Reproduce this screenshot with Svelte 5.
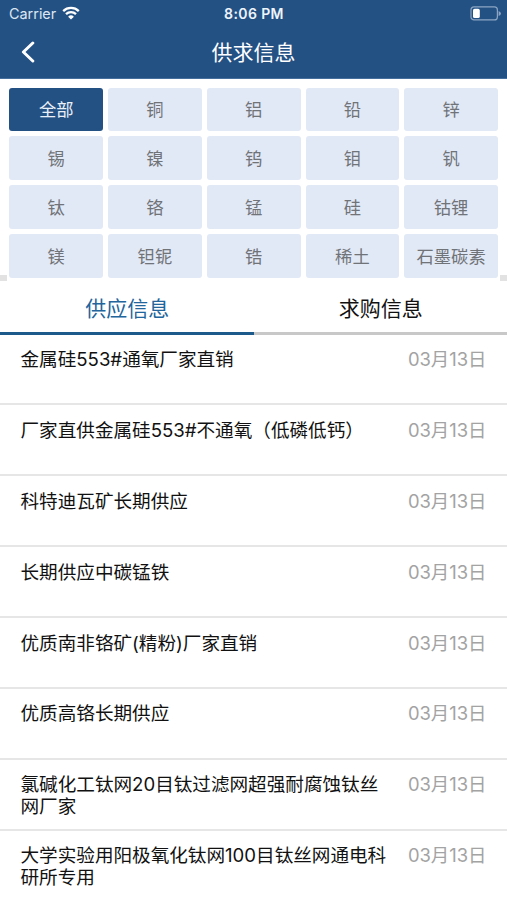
<script lang="ts">
interface Post {
  id: number
  title: string
  date: string
}

type TabKey = 'supply' | 'demand'

const categories = [
  '全部', '铜', '铝', '铅', '锌',
  '锡', '镍', '钨', '钼', '钒',
  '钛', '铬', '锰', '硅', '钴锂',
  '镁', '钽铌', '锆', '稀土', '石墨碳素',
]

const tabs: { key: TabKey; label: string }[] = [
  { key: 'supply', label: '供应信息' },
  { key: 'demand', label: '求购信息' },
]

const posts: Post[] = [
  { id: 1, title: '金属硅553#通氧厂家直销', date: '03月13日' },
  { id: 2, title: '厂家直供金属硅553#不通氧（低磷低钙）', date: '03月13日' },
  { id: 3, title: '科特迪瓦矿长期供应', date: '03月13日' },
  { id: 4, title: '长期供应中碳锰铁', date: '03月13日' },
  { id: 5, title: '优质南非铬矿(精粉)厂家直销', date: '03月13日' },
  { id: 6, title: '优质高铬长期供应', date: '03月13日' },
  { id: 7, title: '氯碱化工钛网20目钛过滤网超强耐腐蚀钛丝网厂家', date: '03月13日' },
  { id: 8, title: '大学实验用阳极氧化钛网100目钛丝网通电科研所专用', date: '03月13日' },
]

let activeCategory = $state('全部')
let activeTab = $state<TabKey>('supply')
</script>

<div class="screen">
  <header>
    <div class="status-bar">
      <div class="carrier">
        <span>Carrier</span>
        <svg class="wifi" viewBox="0 0 18 14" aria-hidden="true">
          <path d="M1.2 5.1a11.2 11.2 0 0 1 15.6 0" />
          <path d="M4 8.2a7.2 7.2 0 0 1 10 0" />
          <path class="dot" d="M9 13.6 6.1 10.7a4.1 4.1 0 0 1 5.8 0z" />
        </svg>
      </div>
      <span class="time">8:06 PM</span>
      <svg class="battery" viewBox="0 0 32 15" aria-hidden="true">
        <rect class="shell" x="1" y="0.9" width="26.4" height="13" rx="3" />
        <rect class="level" x="3" y="2.8" width="6.8" height="9.2" rx="1.6" />
        <path class="cap" d="M28.6 5v5q2.4-1 2.4-2.5T28.6 5z" />
      </svg>
    </div>
    <div class="nav-bar">
      <button class="back" aria-label="返回">
        <svg viewBox="0 0 14 22" aria-hidden="true">
          <path d="M11.8 2 2.4 11l9.4 9" />
        </svg>
      </button>
      <h1>供求信息</h1>
    </div>
  </header>

  <div class="filter">
    <div class="categories">
      {#each categories as name (name)}
        <button
          class="category"
          class:active={name === activeCategory}
          onclick={() => (activeCategory = name)}
        >{name}</button>
      {/each}
    </div>
  </div>

  <div class="tabs" role="tablist">
    {#each tabs as tab (tab.key)}
      <button
        class="tab"
        class:active={tab.key === activeTab}
        role="tab"
        aria-selected={tab.key === activeTab}
        onclick={() => (activeTab = tab.key)}
      >{tab.label}</button>
    {/each}
  </div>

  <ul class="posts">
    {#each posts as post (post.id)}
      <li>
        <span class="title">{post.title}</span>
        <time>{post.date}</time>
      </li>
    {/each}
  </ul>
</div>

<style>
  :global(body) {
    background: #fff;
  }

  .screen {
    height: 900px;
    overflow: hidden;
    display: flex;
    flex-direction: column;
    background: #fff;
    font-family: Inter, 'Noto Sans CJK SC', sans-serif;
  }

  button {
    margin: 0;
    padding: 0;
    border: none;
    background: none;
    font-family: inherit;
    cursor: pointer;
  }

  header {
    flex: none;
    height: 79px;
    box-sizing: border-box;
    background: #245184;
    border-bottom: 1px solid #466f9e;
    color: #fff;
  }

  .status-bar {
    display: grid;
    grid-template-columns: 1fr auto 1fr;
    align-items: center;
    height: 27px;
    padding: 0 5px 0 9px;
  }

  .carrier {
    display: flex;
    align-items: center;
    gap: 6px;
    font-size: 14.4px;
    color: #dce6f2;
  }

  .wifi {
    width: 18px;
    height: 14px;
    margin-top: -1px;
    fill: none;
    stroke: #fff;
    stroke-width: 2.3;
  }

  .wifi .dot {
    fill: #fff;
    stroke: none;
  }

  .time {
    margin-right: 3px;
    font-size: 14px;
    font-weight: 600;
    letter-spacing: 0.4px;
    color: #eef4fb;
  }

  .battery {
    justify-self: end;
    width: 32px;
    height: 15px;
  }

  .shell {
    fill: none;
    stroke: #8ba5c2;
    stroke-width: 1.2;
  }

  .level {
    fill: #fff;
  }

  .cap {
    fill: #8ba5c2;
  }

  .nav-bar {
    display: grid;
    grid-template-columns: 60px 1fr 60px;
    align-items: center;
    height: 51px;
  }

  .back {
    display: flex;
    padding-left: 21px;
  }

  .back svg {
    width: 14px;
    height: 22px;
    margin-top: -1px;
    fill: none;
    stroke: #fff;
    stroke-width: 3;
    stroke-linecap: round;
    stroke-linejoin: round;
  }

  h1 {
    margin: 0;
    font-size: 21px;
    font-weight: 400;
    line-height: 30px;
    text-align: center;
  }

  /* The grey strip shows on both sides of the white category panel. */
  .filter {
    flex: none;
    padding: 0 7px;
    background: linear-gradient(#e2e2e2, #e2e2e2) 0 196px / 100% 6px no-repeat;
  }

  .categories {
    display: grid;
    grid-template-columns: repeat(5, 1fr);
    grid-auto-rows: 43.8px;
    gap: 5px;
    padding: 8.5px 2px 4.3px 2.3px;
    background: #fff;
  }

  .category {
    padding-bottom: 1px;
    border-radius: 3px;
    background: #e2e9f6;
    color: #707378;
    font-size: 17.3px;
    white-space: nowrap;
  }

  .category.active {
    background: #245184;
    color: #e9f0f8;
  }

  .tabs {
    flex: none;
    display: grid;
    grid-template-columns: 1fr 1fr;
    height: 52.6px;
  }

  .tab {
    padding: 4px 0 0 1px;
    border-bottom: 3px solid #c8c8c8;
    color: #111;
    font-size: 21px;
    line-height: 30px;
  }

  .tab.active {
    border-bottom-color: #1c5a8c;
    color: #22659c;
  }

  .posts {
    margin: 0;
    padding: 0;
    list-style: none;
  }

  li {
    display: flex;
    justify-content: space-between;
    align-items: flex-start;
    box-sizing: border-box;
    height: 70.87px;
    padding: 13.5px 20.5px 0 20.5px;
    border-bottom: 2px solid #e6e6e6;
    font-size: 18.6px;
    line-height: 22px;
  }

  li:last-child {
    border-bottom: none;
  }

  .title {
    width: 368px;
    color: #111;
  }

  time {
    color: #a3a3a3;
    font-size: 18.4px;
    white-space: nowrap;
  }
</style>
